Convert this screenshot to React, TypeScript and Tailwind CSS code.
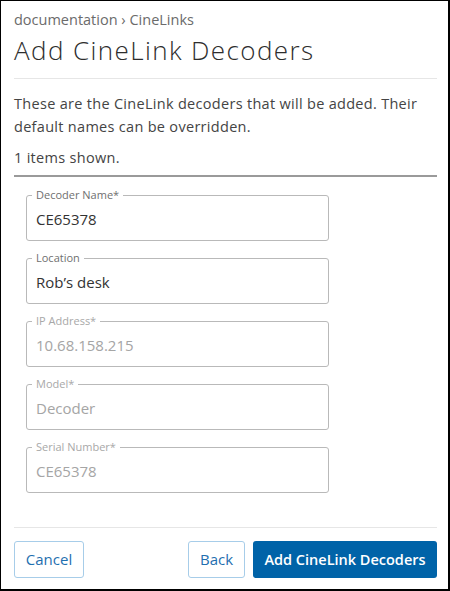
import React from "react";

const font = { fontFamily: '"Open Sans", "Liberation Sans", sans-serif' };

function Field({ label, value, disabled }: { label: string; value: string; disabled?: boolean }) {
  return (
    <div className="relative ml-[12px] h-[46px] w-[303px] rounded-[3px] border border-[#b9b9b9]">
      <span
        className={`absolute left-[5px] top-[-8px] bg-white px-[4px] text-[11px] leading-[14px] ${
          disabled ? "text-[#a8a8a8]" : "text-[#6f6f6f]"
        }`}
      >
        {label}
      </span>
      <div
        className={`pl-[9px] pt-[13px] text-[15px] leading-[20px] ${
          disabled ? "text-[#a5a5a5]" : "text-[#333333]"
        }`}
      >
        {value}
      </div>
    </div>
  );
}

export default function App() {
  return (
    <div
      style={font}
      className="flex h-[591px] w-[450px] flex-col border-b-2 border-l border-r-2 border-t border-black bg-white pl-[13px] pr-[11px]"
    >
      <div className="mt-[9px] text-[14.5px] leading-[20px] text-[#6b6b6b]">documentation › CineLinks</div>
      <h1 className="mt-[3px] text-[26px] font-light leading-[34px] tracking-[1.4px] text-[#2d2d2d]">
        Add CineLink Decoders
      </h1>
      <div className="mt-[11px] h-px bg-[#e6e6e6]" />
      <p className="mt-[13px] text-[14.5px] leading-[23px] tracking-[0.3px] text-[#444444]">
        These are the CineLink decoders that will be added. Their default names can be overridden.
      </p>
      <p className="mt-[8px] text-[14.5px] leading-[23px] tracking-[0.3px] text-[#444444]">1 items shown.</p>
      <div className="mt-[6px] h-[2px] bg-[#9a9a9a]" />
      <div className="mt-[18px] flex flex-col gap-[17px]">
        <Field label="Decoder Name*" value="CE65378" />
        <Field label="Location" value="Rob’s desk" />
        <Field label="IP Address*" value="10.68.158.215" disabled />
        <Field label="Model*" value="Decoder" disabled />
        <Field label="Serial Number*" value="CE65378" disabled />
      </div>
      <div className="mt-auto h-px bg-[#e6e6e6]" />
      <div className="mb-[11px] mt-[13px] flex items-center">
        <button className="h-[37px] w-[70px] rounded-[3px] border border-[#a7cde9] text-[15px] font-medium text-[#1f6fb0]">
          Cancel
        </button>
        <div className="flex-1" />
        <button className="h-[37px] w-[57px] rounded-[3px] border border-[#a7cde9] text-[15px] font-medium text-[#1f6fb0]">
          Back
        </button>
        <button className="ml-[8px] h-[37px] w-[184px] rounded-[3px] bg-[#0063a8] text-[14.5px] font-semibold text-white">
          Add CineLink Decoders
        </button>
      </div>
    </div>
  );
}
